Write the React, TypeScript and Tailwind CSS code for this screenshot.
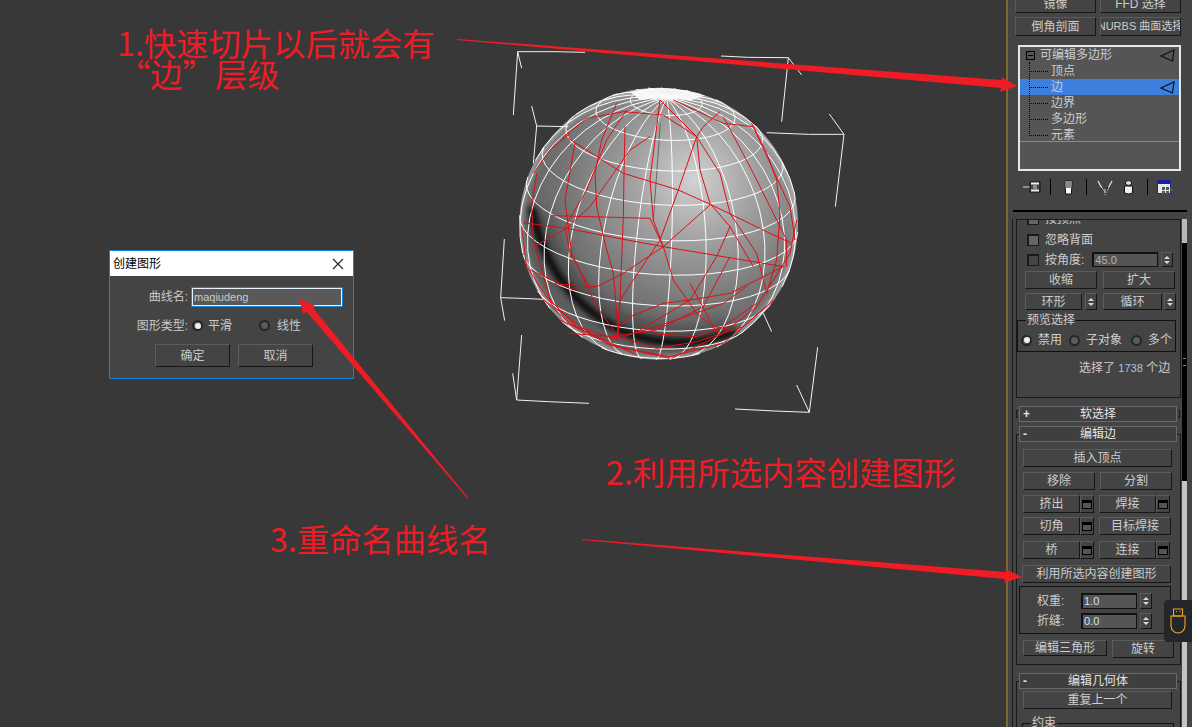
import type { ReactNode } from 'react';

const raised =
  'border border-t-[#5c5c5c] border-l-[#5c5c5c] border-r-[#161616] border-b-[#161616] bg-[#444444]';

// sphere wireframe, in 3x crop coordinates
const CX = 506;
const CY = 551;
const RX = 418;
const RY = 408;
const TILT = (22 * Math.PI) / 180;
const ROLL = (3.5 * Math.PI) / 180;

function project(lat: number, lon: number) {
  const x = Math.cos(lat) * Math.sin(lon);
  const y = Math.sin(lat);
  const z = Math.cos(lat) * Math.cos(lon);
  const y2 = y * Math.cos(TILT) - z * Math.sin(TILT);
  const z2 = y * Math.sin(TILT) + z * Math.cos(TILT);
  const x3 = x * Math.cos(ROLL) + y2 * Math.sin(ROLL);
  const y3 = -x * Math.sin(ROLL) + y2 * Math.cos(ROLL);
  return { x: CX + x3 * RX, y: CY - y3 * RY, z: z2 };
}

function frontPath(pts: { x: number; y: number; z: number }[]) {
  let d = '';
  let pen = false;
  for (const p of pts) {
    if (p.z < -0.02) {
      pen = false;
      continue;
    }
    d += `${pen ? 'L' : 'M'}${p.x.toFixed(1)} ${p.y.toFixed(1)}`;
    pen = true;
  }
  return d;
}

const wire: string[] = [];
for (let i = -5; i <= 5; i++) {
  const lat = (i * 15 * Math.PI) / 180;
  const pts = [];
  for (let a = 0; a <= 48; a++) pts.push(project(lat, (a * 7.5 * Math.PI) / 180));
  wire.push(frontPath(pts));
}
for (let j = 0; j < 24; j++) {
  const lon = ((j * 15 + 6) * Math.PI) / 180;
  const pts = [];
  for (let a = -12; a <= 12; a++) pts.push(project((a * 7.5 * Math.PI) / 180, lon));
  wire.push(frontPath(pts));
}

const redLines = [
  '235,295 400,400 565,450 665,495 840,580 905,610',
  '100,548 230,565 395,597 520,620 700,650 880,680',
  '185,527 300,530 480,535',
  '215,295 290,235 400,215 520,225 620,290 690,400 720,520 800,640 830,760',
  '510,180 620,290 565,450 510,600 390,780 380,900',
  '380,190 335,300 315,400 320,500 345,610 370,700 385,880',
  '405,260 402,400 400,530 390,780 385,900',
  '480,535 520,620 550,720 620,820 690,880',
  '660,495 520,620 400,700 320,740 180,730',
  '690,215 640,260 620,290 630,390 660,490 720,560 790,680',
  '785,250 830,340 860,420 870,520 860,660 830,760',
  '140,400 125,500 130,600 180,780 260,860 385,900',
  '255,310 225,480 245,640 320,800 385,890',
  '230,880 380,890 500,925 620,905 760,860 850,780',
  '545,955 700,880 800,800 900,640 920,540',
  '400,890 560,840 700,790 770,740',
  '130,620 230,565 300,500 420,330 480,290',
  '510,180 480,420 490,540 520,620',
  '450,870 600,780 680,650 720,560',
  '700,230 790,400 890,600 890,680',
  '360,890 500,870 640,800 720,650',
  '210,840 380,920 540,950 700,910 830,800',
  '95,560 110,680 190,800 300,880 440,945',
  '550,180 700,250 790,260 900,500 915,600',
  '410,210 350,300 290,450 225,560 240,640 300,745',
  '120,690 240,745 320,740',
  '390,860 420,830 520,790 600,780 720,760 880,680',
  '440,870 470,880 620,890 700,860 800,790',
  '150,770 240,850 360,915 540,955',
  '600,730 670,860 730,870',
  '130,400 180,330 240,280',
];

const cage = [
  '285,37 195,35 83,35 70,225',
  '83,35 95,85',
  '693,48 775,52 895,53 875,245',
  '895,53 935,105',
  '125,198 140,258 130,370',
  '140,258 235,260',
  '1018,222 1062,283 1036,500',
  '1062,283 955,283 830,278',
  '43,597 32,773 44,842',
  '32,773 93,775 160,778',
  '820,820 845,875',
  '95,885 80,1080 68,1000',
  '80,1080 175,1085 297,1090',
  '983,922 958,1117 920,1035',
  '958,1117 855,1113 735,1107',
];

function Sphere() {
  return (
    <svg className="absolute left-[490px] top-[40px]" width={370} height={380} viewBox="0 0 1110 1140">
      <defs>
        <radialGradient id="ball" gradientUnits="userSpaceOnUse" cx={610} cy={420} r={540}>
          <stop offset="0" stopColor="#d2d2d2" />
          <stop offset="0.35" stopColor="#a0a0a0" />
          <stop offset="0.7" stopColor="#767676" />
          <stop offset="1" stopColor="#5e5e5e" />
        </radialGradient>
        <clipPath id="ballClip">
          <ellipse cx={CX} cy={CY} rx={RX} ry={RY} />
        </clipPath>
        <filter id="soft" x="-20%" y="-20%" width="140%" height="140%">
          <feGaussianBlur stdDeviation="9" />
        </filter>
        <filter id="wide" x="-30%" y="-30%" width="160%" height="160%">
          <feGaussianBlur stdDeviation="22" />
        </filter>
      </defs>
      <ellipse cx={CX} cy={CY} rx={RX} ry={RY} fill="url(#ball)" />
      <g clipPath="url(#ballClip)">
        <ellipse cx={CX} cy={CY} rx={RX} ry={RY} fill="none" stroke="#c4c4c4" strokeWidth={14} filter="url(#soft)" />
        <path
          d="M150 520 C180 660 260 770 390 840 C490 890 620 900 720 860"
          fill="none"
          stroke="#222"
          strokeWidth={50}
          opacity={0.45}
          filter="url(#wide)"
        />
        <path
          d="M125 500 C150 650 230 780 370 860 C470 915 620 925 740 875"
          fill="none"
          stroke="#000"
          strokeWidth={22}
          filter="url(#soft)"
        />
        <path d="M420 155 Q530 130 650 165 L600 182 Q530 165 450 180 Z" fill="#f0f0f0" />
      </g>
      <path d="M511 250 L490 540" stroke="#666" strokeWidth={3} fill="none" />
      <g fill="none" stroke="#fff" strokeWidth={3}>
        {wire.map((d, i) => (
          <path key={i} d={d} />
        ))}
      </g>
      <g fill="none" stroke="#dc1017" strokeWidth={3}>
        {redLines.map((p, i) => (
          <polyline key={i} points={p} />
        ))}
      </g>
      <g fill="none" stroke="#f2f2f2" strokeWidth={3}>
        {cage.map((p, i) => (
          <polyline key={i} points={p} />
        ))}
      </g>
    </svg>
  );
}

function Arrows() {
  return (
    <svg className="absolute left-0 top-0 pointer-events-none" width={1192} height={727} viewBox="0 0 1192 727">
      <g fill="#ee1c25">
        <polygon points="457,39 1002,80 1001,77 1017,86 1000,92 1001,88 457,40" />
        <polygon points="582,539 1006,572 1005,569 1022,577 1004,583 1005,579 582,540" />
        <polygon points="467,498 468,497.5 313,308 315,306 299,298 303,314 306.5,311.5" />
      </g>
    </svg>
  );
}

function Note({ className, children }: { className: string; children: ReactNode }) {
  return (
    <div
      lang="zh-CN"
      className={`absolute whitespace-pre font-['Noto_Sans_CJK_SC',sans-serif] text-[32.3px] leading-[31px] text-[#ee1c25] ${className}`}
    >
      {children}
    </div>
  );
}

function Radio({ on = false }: { on?: boolean }) {
  return (
    <span className="flex h-[11px] w-[11px] shrink-0 items-center justify-center rounded-full border-2 border-[#262626] bg-[#5a5a5a]">
      {on && <span className="h-[6px] w-[6px] rounded-full bg-[#eeeeee]" />}
    </span>
  );
}

function Dialog() {
  return (
    <div className="absolute left-[109px] top-[250px] flex h-[129px] w-[245px] flex-col border border-[#1782d8] bg-[#444444] text-[12px] text-[#c9c9c9]">
      <div className="flex h-[25px] items-center justify-between bg-white pl-[3px] pr-[9px] text-black">
        <span>创建图形</span>
        <svg width={12} height={12} viewBox="0 0 12 12" stroke="#222" strokeWidth={1.1}>
          <path d="M1 1l10 10M11 1L1 11" />
        </svg>
      </div>
      <div className="mt-[12px] flex h-[18px] items-center">
        <span className="w-[78px] text-right leading-none">曲线名:</span>
        <div className="ml-[4px] flex h-[18px] w-[150px] items-center border border-[#e8f4ff] bg-[#595959] pl-[1px] text-[11px] outline outline-[#1782d8]">
          maqiudeng
        </div>
      </div>
      <div className="mt-[10px] flex h-[19px] items-center">
        <span className="w-[78px] text-right">图形类型:</span>
        <span className="ml-[4px]">
          <Radio on />
        </span>
        <span className="ml-[5px] w-[40px]">平滑</span>
        <span className="ml-[11px]">
          <Radio />
        </span>
        <span className="ml-[7px]">线性</span>
      </div>
      <div className="mt-[9px] flex gap-[8px] pl-[45px]">
        <button className={`h-[23px] w-[75px] ${raised}`}>确定</button>
        <button className={`h-[23px] w-[75px] ${raised}`}>取消</button>
      </div>
    </div>
  );
}

function Btn({ w, h = 18, label, className = '' }: { w: number; h?: number; label: string; className?: string }) {
  return (
    <button
      style={{ width: w, height: h }}
      className={`flex shrink-0 items-center justify-center overflow-hidden whitespace-nowrap leading-none ${raised} ${className}`}
    >
      {label}
    </button>
  );
}

function Dots({ w = 14, h = 17 }: { w?: number; h?: number }) {
  return (
    <button style={{ width: w, height: h }} className={`flex shrink-0 items-center justify-center ${raised}`}>
      <span className="h-[9px] w-[10px] border border-t-[3px] border-black bg-[#555]" />
    </button>
  );
}

function Spin({ h = 17 }: { h?: number }) {
  return (
    <div style={{ height: h }} className={`flex w-[12px] shrink-0 flex-col items-center justify-center gap-[2px] ${raised}`}>
      <span className="h-0 w-0 border-x-[3px] border-b-[3px] border-x-transparent border-b-[#d8d8d8]" />
      <span className="h-0 w-0 border-x-[3px] border-t-[3px] border-x-transparent border-t-[#d8d8d8]" />
    </div>
  );
}

function Check({ label, filled = false }: { label: string; filled?: boolean }) {
  return (
    <div className="flex h-[14px] items-center pl-[10px]">
      <span
        className={`h-[12px] w-[12px] border border-t-[2px] border-l-[2px] border-[#1a1a1a] ${filled ? 'bg-[#666666]' : 'bg-[#454545]'}`}
      />
      <span className="ml-[6px]">{label}</span>
    </div>
  );
}

function Header({ sign, label, ticks = false }: { sign: string; label: string; ticks?: boolean }) {
  return (
    <div className="relative ml-[3px] flex h-[16px] w-[158px] items-center justify-center border border-[#6a6a6a] bg-[#3f3f3f] text-[#e4e4e4]">
      {ticks && (
        <>
          <span className="absolute left-[-4px] top-[3px] h-[8px] w-[2px] border-y border-l border-[#1a1a1a]" />
          <span className="absolute right-[-4px] top-[3px] h-[8px] w-[2px] border-y border-r border-[#1a1a1a]" />
        </>
      )}
      <span className="absolute left-[3px] top-[-1px] font-bold leading-[16px]">{sign}</span>
      {label}
    </div>
  );
}

function StackRow({ label, active = false }: { label: string; active?: boolean }) {
  return (
    <div className={`flex h-[16px] items-center pl-[11px] ${active ? 'bg-[#3c7fdc]' : ''}`}>
      <span className="w-[17px] border-t border-dotted border-black" />
      <span className="ml-[3px] leading-none">{label}</span>
      {active && <Gizmo />}
    </div>
  );
}

function Gizmo() {
  return (
    <svg className="ml-auto mr-[4px]" width={15} height={13} viewBox="0 0 15 13" fill="none" stroke="#111" strokeWidth={1.2}>
      <path d="M1 7L14 1l-1.5 11z" />
    </svg>
  );
}

function ToolbarIcons() {
  return (
    <div className="mt-[8px] flex h-[16px] items-center pl-[15px]">
      <svg width={18} height={14} viewBox="0 0 18 14">
        <path d="M0 7h7" stroke="#ddd" />
        <path d="M7 2h10v10H7z" fill="none" stroke="#111" />
        <path d="M8 3.5h8M8 10.5h8" stroke="#eee" strokeWidth={2} />
        <path d="M10 5h4v4h-4z" fill="#888" />
      </svg>
      <span className="ml-[9px] h-[16px] w-px bg-black" />
      <svg className="ml-[12px]" width={11} height={15} viewBox="0 0 11 15">
        <path d="M2 1h7l-.6 13H2.6z" fill="#fff" stroke="#111" />
        <path d="M2.2 1h6.6l-.2 7H2.5z" fill="#8a8a8a" />
      </svg>
      <span className="ml-[12px] h-[16px] w-px bg-black" />
      <svg className="ml-[10px]" width={16} height={15} viewBox="0 0 16 15" fill="none">
        <path d="M1 1l7 13L15 1" stroke="#ddd" strokeWidth={1.3} />
        <path d="M4 8l4 6 3-7" stroke="#111" />
        <path d="M8 9v4" stroke="#ddd" />
      </svg>
      <svg className="ml-[10px]" width={11} height={15} viewBox="0 0 11 15">
        <ellipse cx={5.5} cy={3} rx={3.2} ry={2.4} fill="#ddd" stroke="#111" />
        <path d="M1.5 6h8v7q-4 2-8 0z" fill="#eee" stroke="#111" />
      </svg>
      <span className="ml-[13px] h-[16px] w-px bg-black" />
      <svg className="ml-[9px]" width={16} height={15} viewBox="0 0 16 15">
        <path d="M.5.5h13v13H.5z" fill="#e8e8e8" stroke="#1c1fa8" />
        <path d="M1 1h12v3H1z" fill="#1c1fa8" />
        <path d="M5 7h3v3H5zM9 7h3v3H9zM9 11h3v3H9zM13 8h3v3h-3zM5 11h3v3H5z" fill="#555" />
      </svg>
    </div>
  );
}

function Sidebar() {
  return (
    <div className="flex w-[184px] shrink-0 flex-col bg-[#444444] text-[12px] text-[#cdcdcd]">
      <div className="flex h-[13px] items-end gap-[4px] overflow-hidden pl-[7px]">
        <Btn w={81} label="镜像" className="shrink-0" />
        <Btn w={81} label="FFD 选择" />
      </div>
      <div className="mt-[4px] flex gap-[4px] pl-[7px]">
        <Btn w={81} h={19} label="倒角剖面" />
        <Btn w={81} h={19} label="NURBS 曲面选择" className="text-[11px]" />
      </div>

      <div className="relative ml-[10px] mt-[9px] h-[126px] w-[163px] border-2 border-[#e8e8e8] bg-[#555555]">
        <div className="flex h-[16px] items-center pl-[6px]">
          <span className="flex h-[9px] w-[9px] items-center justify-center border border-black">
            <span className="h-px w-[5px] bg-black" />
          </span>
          <span className="ml-[5px] leading-none">可编辑多边形</span>
          <Gizmo />
        </div>
        <div className="absolute left-[9px] top-[15px] h-[74px] border-l border-dotted border-black" />
        <StackRow label="顶点" />
        <StackRow label="边" active />
        <StackRow label="边界" />
        <StackRow label="多边形" />
        <div className="h-[14px] overflow-hidden">
          <StackRow label="元素" />
        </div>
        <div className="h-px bg-[#8a8a8a]" />
      </div>

      <ToolbarIcons />

      <div className="ml-[5px] mt-[15px] h-[2px] w-[174px] bg-black" />

      <div className="mt-[7px] flex min-h-0 flex-1 overflow-hidden pl-[4px]">
        <div className="w-[168px] border-l border-[#1a1a1a] pl-[3px]">
          <div className="w-[165px] border border-b-0 border-[#1a1a1a]">
            <div className="flex h-[6px] items-end overflow-hidden">
              <Check label="按顶点" filled />
            </div>
            <div className="mt-[6px] pt-px">
              <Check label="忽略背面" filled />
            </div>
            <div className="mt-[5px] flex h-[15px] items-center">
              <Check label="按角度:" />
              <div className="ml-[8px] flex h-[15px] w-[66px] items-center border border-t-[2px] border-l-[2px] border-[#111] bg-[#555] pl-[1px] text-[11px] text-[#b4b4b4]">
                45.0
              </div>
              <span className="ml-[3px]">
                <Spin h={15} />
              </span>
            </div>
            <div className="mt-[4px] flex gap-[6px] pl-[8px]">
              <Btn w={72} label="收缩" />
              <Btn w={72} label="扩大" />
            </div>
            <div className="mt-[4px] flex pl-[8px]">
              <Btn w={57} h={17} label="环形" />
              <span className="ml-[3px]">
                <Spin />
              </span>
              <span className="ml-[6px]">
                <Btn w={59} h={17} label="循环" />
              </span>
              <span className="ml-[2px]">
                <Spin />
              </span>
            </div>
            <div className="relative mt-[10px] h-[32px] w-[159px] border border-[#111]">
              <span className="absolute left-[8px] top-[-9px] bg-[#444444] px-px leading-[16px]">预览选择</span>
              <div className="mt-[10px] flex items-center pl-[3px]">
                <Radio on />
                <span className="ml-[6px] w-[31px]">禁用</span>
                <Radio />
                <span className="ml-[6px] w-[45px]">子对象</span>
                <Radio />
                <span className="ml-[6px]">多个</span>
              </div>
            </div>
            <div className="mt-[7px] h-[38px] pl-[62px] leading-[18px]">
              选择了 <span className="text-[11px] text-[#a9c4e8]">1738</span> 个边
            </div>
          </div>
          <div className="h-px w-[165px] bg-[#1a1a1a]" />

          <div className="mt-[8px]">
            <Header sign="+" label="软选择" ticks />
          </div>
          <div className="mt-[4px]">
            <Header sign="-" label="编辑边" />
          </div>
          <div className="-mt-[8px] h-[231px] w-[165px] border border-[#1a1a1a] pt-[14px] pl-[6px]">
            <Btn w={149} label="插入顶点" />
            <div className="mt-[5px] flex gap-[5px]">
              <Btn w={72} label="移除" />
              <Btn w={72} label="分割" />
            </div>
            <div className="mt-[5px] flex">
              <Btn w={57} label="挤出" />
              <Dots h={18} />
              <span className="ml-[5px]">
                <Btn w={57} label="焊接" />
              </span>
              <Dots h={18} />
            </div>
            <div className="mt-[4px] flex">
              <Btn w={57} label="切角" />
              <Dots h={18} />
              <span className="ml-[5px]">
                <Btn w={72} label="目标焊接" />
              </span>
            </div>
            <div className="mt-[6px] flex">
              <Btn w={57} label="桥" />
              <Dots h={18} />
              <span className="ml-[5px]">
                <Btn w={57} label="连接" />
              </span>
              <Dots h={18} />
            </div>
            <div className="-ml-px mt-[6px]">
              <Btn w={149} label="利用所选内容创建图形" />
            </div>
            <div className="-ml-[4px] mt-[3px] flex h-[48px] w-[152px] flex-col gap-[3px] border border-[#111] pl-[17px] pt-[5px]">
              <div className="flex h-[17px] items-center">
                <span className="w-[44px]">权重:</span>
                <div className="flex h-[16px] w-[56px] items-center border border-t-[2px] border-l-[2px] border-[#111] bg-[#555] pl-[1px] text-[11px] text-[#cfe0f5]">
                  1.0
                </div>
                <span className="ml-[3px]">
                  <Spin h={16} />
                </span>
              </div>
              <div className="flex h-[17px] items-center">
                <span className="w-[44px]">折缝:</span>
                <div className="flex h-[16px] w-[56px] items-center border border-t-[2px] border-l-[2px] border-[#111] bg-[#555] pl-[1px] text-[11px] text-[#cfe0f5]">
                  0.0
                </div>
                <span className="ml-[3px]">
                  <Spin h={16} />
                </span>
              </div>
            </div>
            <div className="mt-[6px] flex items-start gap-[5px]">
              <Btn w={84} h={16} label="编辑三角形" />
              <Btn w={62} h={18} label="旋转" />
            </div>
          </div>

          <div className="mt-[8px]">
            <Header sign="-" label="编辑几何体" />
          </div>
          <div className="-mt-[8px] h-[60px] w-[165px] border-x border-t border-[#1a1a1a] pl-[6px] pt-[9px]">
            <Btn w={149} label="重复上一个" />
            <div className="relative -ml-[1px] mt-[14px] h-[20px] w-[152px] border border-[#111]">
              <span className="absolute left-[8px] top-[-9px] bg-[#444444] px-px leading-[16px]">约束</span>
            </div>
          </div>
        </div>

        {/* scrollbar */}
        <div className="ml-[2px] flex w-[5px] flex-col">
          <div className="h-[24px] bg-[#b8b8b8]" />
          <div className="flex h-[238px] items-center justify-center bg-black">
            <span className="h-[8px] w-[3px] border-y border-[#888]" />
          </div>
          <div className="flex-1 bg-[#c4c4c4]" />
        </div>
      </div>
    </div>
  );
}

export default function App() {
  return (
    <div className="relative flex h-[727px] w-[1192px] overflow-hidden bg-[#383838] font-['Liberation_Sans','Noto_Sans_CJK_SC',sans-serif]">
      <div className="w-[1006px] shrink-0" />
      <div className="w-[2px] shrink-0 bg-[#7a6a32]" />
      <Sidebar />

      <Sphere />
      <Dialog />
      <Arrows />

      <Note className="left-[117px] top-[27px]">1.快速切片以后就会有</Note>
      <Note className="left-[118px] top-[58px]">“边”层级</Note>
      <Note className="left-[606px] top-[456px]">2.利用所选内容创建图形</Note>
      <Note className="left-[270px] top-[523px]">3.重命名曲线名</Note>

      {/* usb tray icon */}
      <div className="absolute left-[1164px] top-[600px] flex h-[42px] w-[28px] items-center justify-center rounded-l-[4px] bg-[#23272b]">
        <svg width={16} height={26} viewBox="0 0 16 26" fill="none" stroke="#f0a818" strokeWidth={1.1}>
          <path d="M3.5 1h9v7h-9z" />
          <path d="M6 3.5h1M9.5 3.5h1" />
          <path d="M1 8h14v10a7 7 0 0 1-14 0z" />
        </svg>
      </div>
    </div>
  );
}
